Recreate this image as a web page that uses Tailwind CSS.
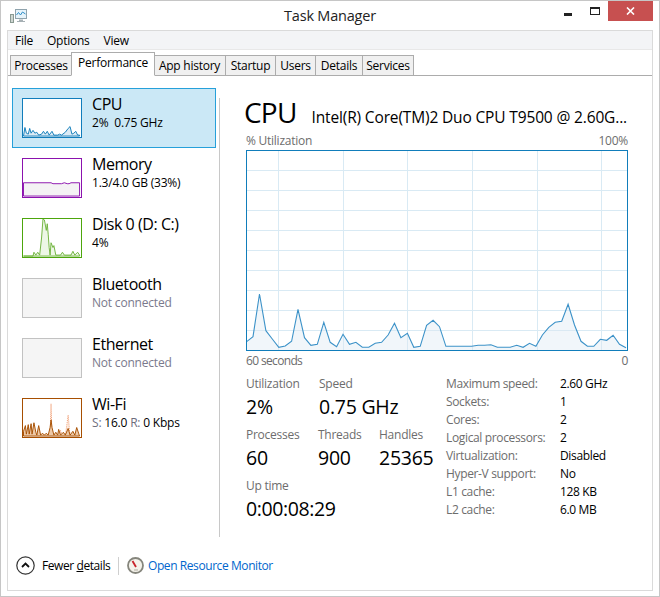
<!DOCTYPE html>
<html lang="en">
<head>
    <meta charset="UTF-8">
    <title>Task Manager</title>
    <script src="https://cdn.jsdelivr.net/npm/@tailwindcss/browser@4"></script>
</head>
<body class="bg-white">
<div class="w-[660px] h-[597px] border border-[#c6c6c6] bg-white overflow-hidden font-['Open_Sans',sans-serif] text-[12px] tracking-[-0.25px] text-black">
    <!-- title bar -->
    <div class="h-[29px] grid grid-cols-[1fr_auto_1fr]">
        <div class="pl-[9px] pt-[8px]">
            <svg width="17" height="15" viewBox="0 0 17 15">
                <rect x="0.5" y="5.5" width="3" height="8" fill="#cfd6d2" stroke="#8a9a92"/>
                <rect x="5.5" y="0.5" width="11" height="9" fill="#e6f3fa" stroke="#8fa3ad"/>
                <path d="M6.5 6l2-2.5 2 2.5 2-3 3 2" fill="none" stroke="#2f8fc9"/>
                <path d="M9 10.5h4v1.5h2v1H7v-1h2z" fill="#a6b0b4"/>
            </svg>
        </div>
        <div class="text-[14.5px] leading-[29px] text-[#222] tracking-[-0.2px]">Task Manager</div>
        <div class="flex justify-end items-start pr-[6px]">
            <div class="w-[8px] h-[3px] bg-[#222] mt-[12px] mr-[18px]"></div>
            <div class="w-[10px] h-[8px] border border-t-2 border-[#222] mt-[6px] mr-[8px]"></div>
            <div class="w-[45px] h-[20px] bg-[#c75050] flex items-center justify-center">
                <svg width="9" height="8" viewBox="0 0 9 8"><path d="M1 0.5l7 7M8 0.5l-7 7" stroke="#fff" stroke-width="1.6"/></svg>
            </div>
        </div>
    </div>

    <div class="ml-[6px] w-[646px] h-[561px] border border-[#dadada] flex flex-col">
        <!-- menu -->
        <div class="h-[19px] bg-[#f3f4f6] border-b border-[#e8e8e8] flex gap-[14px] pl-[7px] leading-[19px]">
            <span>File</span><span>Options</span><span>View</span>
        </div>
        <!-- tabs -->
        <div class="h-[26px] border-b border-[#acacac] flex items-end pl-[2px] leading-[19px]">
            <div class="w-[62px] h-[21px] -mb-px bg-[#f0f0f0] border border-[#acacac] text-center">Processes</div>
            <div class="w-[84px] h-[24px] -ml-px -mb-px bg-white border border-[#acacac] border-b-white text-center leading-[20px] relative">Performance</div>
            <div class="w-[72px] h-[21px] -ml-px -mb-px bg-[#f0f0f0] border border-[#acacac] text-center pr-[1px]">App history</div>
            <div class="w-[51px] h-[21px] -ml-px -mb-px bg-[#f0f0f0] border border-[#acacac] text-center">Startup</div>
            <div class="w-[41px] h-[21px] -ml-px -mb-px bg-[#f0f0f0] border border-[#acacac] text-center">Users</div>
            <div class="w-[48px] h-[21px] -ml-px -mb-px bg-[#f0f0f0] border border-[#acacac] text-center">Details</div>
            <div class="w-[52px] h-[21px] -ml-px -mb-px bg-[#f0f0f0] border border-[#acacac] text-center">Services</div>
        </div>

        <div class="h-[465px] flex">
            <!-- sidebar -->
            <div class="w-[211px] pt-[12px] pl-[4px]">
                <div class="w-[204px] h-[60px] bg-[#cbe8f6] border border-[#26a0da] flex gap-[10px] pl-[9px] pt-[9px]">
                    <svg class="bg-white border border-[#117dbb]" width="60" height="40" viewBox="0 0 60 40">
                        <path d="M0 39L1.500 30L3 36L5 37L6.500 31L8 36L10 33L12 36L14 35L16 38L19 37L21 34L23 37L25 34L27 38L30 34L32 38H36L38 37L40 38L44 35L47 31L49 29L51 37L53 36L55 34L57 38H59V39Z" fill="#dcebf5" stroke="#117dbb"/>
                    </svg>
                    <div>
                        <div class="text-[16px] leading-[20px] mt-[-4px] tracking-[-0.45px]">CPU</div>
                        <div class="leading-[17px] tracking-[-0.2px]">2%&nbsp; 0.75 GHz</div>
                    </div>
                </div>
                <div class="w-[204px] h-[60px] border border-transparent flex gap-[10px] pl-[9px] pt-[9px]">
                    <svg class="bg-white border border-[#8b12ae]" width="60" height="40" viewBox="0 0 60 40">
                        <path d="M0 25H29L31 26H40L43 25L46 26H48L50 25H59V39H0Z" fill="#f4f2f4" stroke="#8b12ae"/>
                    </svg>
                    <div>
                        <div class="text-[16px] leading-[20px] mt-[-4px] tracking-[-0.45px]">Memory</div>
                        <div class="leading-[17px] tracking-[-0.2px]">1.3/4.0 GB (33%)</div>
                    </div>
                </div>
                <div class="w-[204px] h-[60px] border border-transparent flex gap-[10px] pl-[9px] pt-[9px]">
                    <svg class="bg-white border border-[#4da60c]" width="60" height="40" viewBox="0 0 60 40">
                        <path d="M0 39H10L11 35L13 38L15 35L17 38L19 20L20.500 0L22 1L24 12L25 5L26 16L27 30L28 38L29 25L31 30L32 28L34 38H39L41 35L43 38H50L52 34L54 38L57 35L59 38V39Z" fill="#edf7e6" stroke="#6fb33c"/>
                    </svg>
                    <div>
                        <div class="text-[16px] leading-[20px] mt-[-4px] tracking-[-0.45px]">Disk 0 (D: C:)</div>
                        <div class="leading-[17px] tracking-[-0.2px]">4%</div>
                    </div>
                </div>
                <div class="w-[204px] h-[60px] border border-transparent flex gap-[10px] pl-[9px] pt-[9px]">
                    <div class="w-[60px] h-[40px] bg-[#f5f5f5] border border-[#c2c2c2]"></div>
                    <div>
                        <div class="text-[16px] leading-[20px] mt-[-4px] tracking-[-0.45px]">Bluetooth</div>
                        <div class="leading-[17px] tracking-[-0.2px] text-[#7a7a8c]">Not connected</div>
                    </div>
                </div>
                <div class="w-[204px] h-[60px] border border-transparent flex gap-[10px] pl-[9px] pt-[9px]">
                    <div class="w-[60px] h-[40px] bg-[#f5f5f5] border border-[#c2c2c2]"></div>
                    <div>
                        <div class="text-[16px] leading-[20px] mt-[-4px] tracking-[-0.45px]">Ethernet</div>
                        <div class="leading-[17px] tracking-[-0.2px] text-[#7a7a8c]">Not connected</div>
                    </div>
                </div>
                <div class="w-[204px] h-[60px] border border-transparent flex gap-[10px] pl-[9px] pt-[9px]">
                    <svg class="bg-white border border-[#a74f01]" width="60" height="40" viewBox="0 0 60 40">
                        <path d="M28 39L29 5L30 39M37 39L39 33L41 39M44 39L47 17L49 39" fill="#fdeee3" stroke="#ef9a70" stroke-dasharray="1 1"/>
                        <path d="M0 39V34L2 28L3 37L5 27L6 37L8 26L9 37L11 25L13 35L14 38L16 28L18 38L20 36L22 38L24 36L26 38L28 30L29 22L30 30L32 38L34 35L36 38L37 32L39 38L42 35L44 38L47 31L49 38L52 34L54 38L56 30L58 36L59 39Z" fill="#edc9a8" stroke="#a74f01"/>
                    </svg>
                    <div>
                        <div class="text-[16px] leading-[20px] mt-[-4px] tracking-[-0.45px]">Wi-Fi</div>
                        <div class="leading-[17px] tracking-[-0.2px]"><span class="text-[#6d6d7d]">S:</span> 16.0 <span class="text-[#6d6d7d]">R:</span> 0 Kbps</div>
                    </div>
                </div>
            </div>
            <div class="w-px h-[439px] mt-[22px] bg-[#c8c8c8]"></div>

            <!-- main panel -->
            <div class="w-[382px] ml-[26px] flex flex-col">
                <div class="h-[53px] flex items-end gap-[15px] whitespace-nowrap">
                    <span class="text-[28px] leading-[34px] tracking-[-0.8px] ml-[-2px]">CPU</span>
                    <span class="text-[15.5px] leading-[24px] tracking-[-0.15px]">Intel(R) Core(TM)2 Duo CPU T9500 @ 2.60G...</span>
                </div>
                <div class="h-[21px] flex justify-between items-end text-[#6d6d6d]">
                    <span>% Utilization</span><span>100%</span>
                </div>
                <div class="h-[201px] w-[382px] border border-[#117dbb]">
                    <svg width="380" height="199" viewBox="247 151 380 199" class="block">
                        <path d="M278.500 151V350M343.500 151V350M407.500 151V350M472.500 151V350M537.500 151V350M601.500 151V350M247 170.500H627M247 190.500H627M247 210.500H627M247 230.500H627M247 250.500H627M247 270.500H627M247 290.500H627M247 310.500H627M247 330.500H627" stroke="#d9eaf4" fill="none"/>
                        <polygon id="cpu-fill" fill="#dbe8f2" fill-opacity="0.4"/>
                        <polyline id="cpu-line" fill="none" stroke="#3c92c8" stroke-width="1.1"/>
                    </svg>
                </div>
                <div class="h-[16px] mt-[2px] flex justify-between text-[#6d6d6d] leading-[16px]">
                    <span class="tracking-[-0.65px]">60 seconds</span><span>0</span>
                </div>
                <!-- stats -->
                <div class="mt-[7px] flex">
                    <div class="w-[200px]">
                        <div class="flex h-[51px]">
                            <div class="w-[73px]"><div class="h-[16px] leading-[16px] text-[#6d6d6d]">Utilization</div><div class="text-[19.5px] leading-[30px]">2%</div></div>
                            <div><div class="h-[16px] leading-[16px] text-[#6d6d6d]">Speed</div><div class="text-[19.5px] leading-[30px]">0.75 GHz</div></div>
                        </div>
                        <div class="flex h-[51px]">
                            <div class="w-[72px]"><div class="h-[16px] leading-[16px] text-[#6d6d6d]">Processes</div><div class="text-[19.5px] leading-[30px]">60</div></div>
                            <div class="w-[61px]"><div class="h-[16px] leading-[16px] text-[#6d6d6d]">Threads</div><div class="text-[19.5px] leading-[30px]">900</div></div>
                            <div><div class="h-[16px] leading-[16px] text-[#6d6d6d]">Handles</div><div class="text-[19.5px] leading-[30px]">25365</div></div>
                        </div>
                        <div class="h-[16px] leading-[16px] text-[#6d6d6d]">Up time</div>
                        <div class="text-[19.5px] leading-[30px] tracking-[-0.4px]">0:00:08:29</div>
                    </div>
                    <div class="grid grid-cols-[114px_1fr] auto-rows-[18px] leading-[18px] -mt-[1px] tracking-[-0.35px]">
                        <span class="text-[#6d6d6d]">Maximum speed:</span><span>2.60 GHz</span>
                        <span class="text-[#6d6d6d]">Sockets:</span><span>1</span>
                        <span class="text-[#6d6d6d]">Cores:</span><span>2</span>
                        <span class="text-[#6d6d6d]">Logical processors:</span><span>2</span>
                        <span class="text-[#6d6d6d]">Virtualization:</span><span>Disabled</span>
                        <span class="text-[#6d6d6d]">Hyper-V support:</span><span>No</span>
                        <span class="text-[#6d6d6d]">L1 cache:</span><span>128 KB</span>
                        <span class="text-[#6d6d6d]">L2 cache:</span><span>6.0 MB</span>
                    </div>
                </div>
            </div>
        </div>

        <!-- footer -->
        <div class="h-[49px] flex items-center pl-[8px] tracking-[-0.42px]">
            <svg width="19" height="19" viewBox="0 0 19 19">
                <circle cx="9.500" cy="9.500" r="8.700" fill="#fff" stroke="#333" stroke-width="1.200"/>
                <path d="M6 11l3.500-3.500L13 11" fill="none" stroke="#111" stroke-width="1.800"/>
            </svg>
            <span class="ml-[7px] w-[76px]">Fewer <span class="underline">d</span>etails</span>
            <div class="w-px h-[18px] bg-[#cfcfcf]"></div>
            <svg class="ml-[8px]" width="17" height="17" viewBox="0 0 17 17">
                <circle cx="8.500" cy="8.500" r="7.500" fill="#f4f2ea" stroke="#85857c" stroke-width="1.800"/>
                <path d="M5.500 4l3.500 6" stroke="#c8242b" stroke-width="1.800"/>
                <path d="M7 13h4" stroke="#b0aca0"/>
            </svg>
            <span class="ml-[4px] text-[#0066cc]">Open Resource Monitor</span>
        </div>
    </div>
</div>
<script>
    // samples read off the 3x crop, converted to page y
    const samples = [215,200,72,182,207,232,228,214,118,203,226,223,157,217,230,193,223,217,232,232,220,217,195,160,203,190,232,229,166,151,170,229,229,229,229,229,226,226,224,232,232,232,226,232,220,229,195,172,157,154,103,165,214,229,229,208,211,196,223,233];
    const pts = samples.map((z, i) => (246.6 + 6.43 * i).toFixed(1) + ',' + (270 + z / 3).toFixed(1));
    document.getElementById('cpu-line').setAttribute('points', pts.join(' '));
    document.getElementById('cpu-fill').setAttribute('points', '246.6,350 ' + pts.join(' ') + ' 626,350');
</script>
</body>
</html>
